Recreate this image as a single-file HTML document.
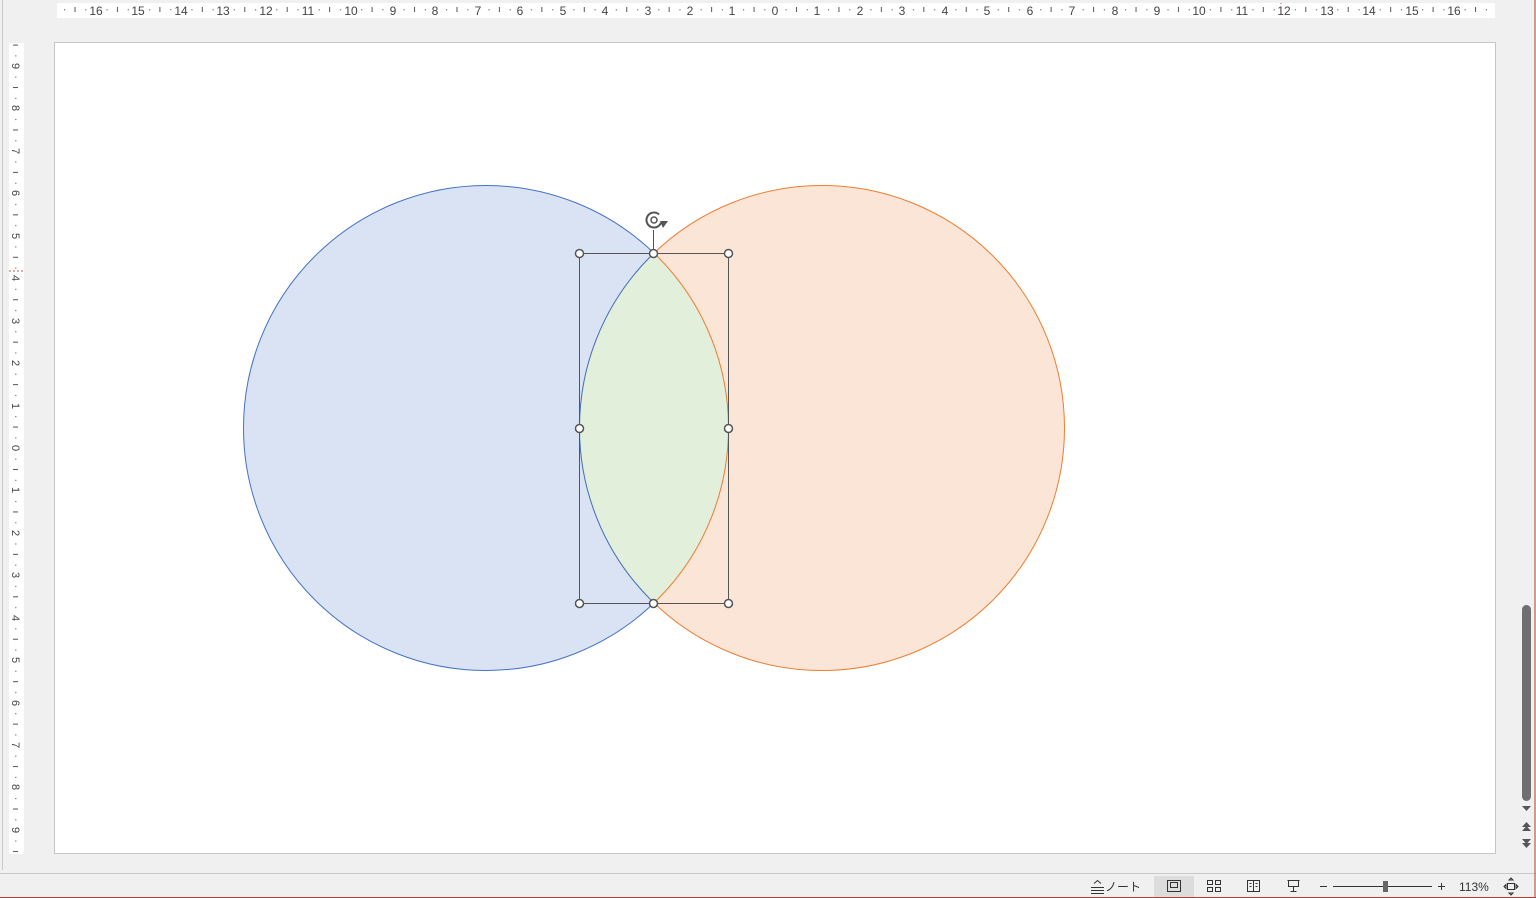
<!DOCTYPE html>
<html><head><meta charset="utf-8"><style>
html,body{margin:0;padding:0;width:1536px;height:898px;overflow:hidden;background:#f0f0f0;font-family:"Liberation Sans","Noto Sans CJK JP",sans-serif}
</style></head><body>
<svg width="1536" height="898" viewBox="0 0 1536 898" xmlns="http://www.w3.org/2000/svg" style="position:absolute;left:0;top:0">
<defs>
<pattern id="ht" x="775" y="0" width="42.44" height="20" patternUnits="userSpaceOnUse">
<rect x="10.6" y="9" width="1" height="1.5" fill="#777"/><rect x="21" y="7" width="1" height="5" fill="#555"/><rect x="31.8" y="9" width="1" height="1.5" fill="#777"/>
</pattern>
<pattern id="vt" x="0" y="448" width="20" height="42.44" patternUnits="userSpaceOnUse">
<rect x="15" y="10.6" width="1.5" height="1" fill="#777"/><rect x="13" y="21" width="5" height="1" fill="#555"/><rect x="15" y="31.8" width="1.5" height="1" fill="#777"/>
</pattern>
<clipPath id="cb"><circle cx="486" cy="428" r="242.5"/></clipPath>
<clipPath id="co"><circle cx="822" cy="428" r="242.5"/></clipPath>
</defs>
<line x1="2.5" y1="0" x2="2.5" y2="870" stroke="#c8c8c8"/>
<rect x="57" y="3" width="1438" height="15" fill="#fff"/>
<rect x="57" y="3" width="1438" height="15" fill="url(#ht)"/>
<rect x="9" y="43" width="15" height="811" fill="#fff"/>
<rect x="9" y="43" width="15" height="811" fill="url(#vt)"/>
<line x1="1281" y1="3" x2="1281" y2="18" stroke="#c0504d" stroke-dasharray="2,2"/>
<line x1="9" y1="271" x2="24" y2="271" stroke="#c0504d" stroke-dasharray="2,2"/>
<g font-size="12" fill="#444" text-anchor="middle">
<rect x="88" y="4" width="16" height="13" fill="#fff"/><text x="96" y="15">16</text>
<rect x="130" y="4" width="16" height="13" fill="#fff"/><text x="138" y="15">15</text>
<rect x="173" y="4" width="16" height="13" fill="#fff"/><text x="181" y="15">14</text>
<rect x="215" y="4" width="16" height="13" fill="#fff"/><text x="223" y="15">13</text>
<rect x="258" y="4" width="16" height="13" fill="#fff"/><text x="266" y="15">12</text>
<rect x="300" y="4" width="16" height="13" fill="#fff"/><text x="308" y="15">11</text>
<rect x="342" y="4" width="16" height="13" fill="#fff"/><text x="351" y="15">10</text>
<rect x="388" y="4" width="9" height="13" fill="#fff"/><text x="393" y="15">9</text>
<rect x="431" y="4" width="9" height="13" fill="#fff"/><text x="435" y="15">8</text>
<rect x="473" y="4" width="9" height="13" fill="#fff"/><text x="478" y="15">7</text>
<rect x="516" y="4" width="9" height="13" fill="#fff"/><text x="520" y="15">6</text>
<rect x="558" y="4" width="9" height="13" fill="#fff"/><text x="563" y="15">5</text>
<rect x="601" y="4" width="9" height="13" fill="#fff"/><text x="605" y="15">4</text>
<rect x="643" y="4" width="9" height="13" fill="#fff"/><text x="648" y="15">3</text>
<rect x="685" y="4" width="9" height="13" fill="#fff"/><text x="690" y="15">2</text>
<rect x="728" y="4" width="9" height="13" fill="#fff"/><text x="732" y="15">1</text>
<rect x="770" y="4" width="9" height="13" fill="#fff"/><text x="775" y="15">0</text>
<rect x="813" y="4" width="9" height="13" fill="#fff"/><text x="817" y="15">1</text>
<rect x="855" y="4" width="9" height="13" fill="#fff"/><text x="860" y="15">2</text>
<rect x="898" y="4" width="9" height="13" fill="#fff"/><text x="902" y="15">3</text>
<rect x="940" y="4" width="9" height="13" fill="#fff"/><text x="945" y="15">4</text>
<rect x="983" y="4" width="9" height="13" fill="#fff"/><text x="987" y="15">5</text>
<rect x="1025" y="4" width="9" height="13" fill="#fff"/><text x="1030" y="15">6</text>
<rect x="1067" y="4" width="9" height="13" fill="#fff"/><text x="1072" y="15">7</text>
<rect x="1110" y="4" width="9" height="13" fill="#fff"/><text x="1115" y="15">8</text>
<rect x="1152" y="4" width="9" height="13" fill="#fff"/><text x="1157" y="15">9</text>
<rect x="1192" y="4" width="16" height="13" fill="#fff"/><text x="1199" y="15">10</text>
<rect x="1234" y="4" width="16" height="13" fill="#fff"/><text x="1242" y="15">11</text>
<rect x="1276" y="4" width="16" height="13" fill="#fff"/><text x="1284" y="15">12</text>
<rect x="1319" y="4" width="16" height="13" fill="#fff"/><text x="1327" y="15">13</text>
<rect x="1361" y="4" width="16" height="13" fill="#fff"/><text x="1369" y="15">14</text>
<rect x="1404" y="4" width="16" height="13" fill="#fff"/><text x="1412" y="15">15</text>
<rect x="1446" y="4" width="16" height="13" fill="#fff"/><text x="1454" y="15">16</text>
</g>
<g font-size="11" fill="#444" text-anchor="middle">
<text transform="translate(12,66) rotate(90)">9</text>
<text transform="translate(12,108) rotate(90)">8</text>
<text transform="translate(12,151) rotate(90)">7</text>
<text transform="translate(12,193) rotate(90)">6</text>
<text transform="translate(12,236) rotate(90)">5</text>
<text transform="translate(12,278) rotate(90)">4</text>
<text transform="translate(12,321) rotate(90)">3</text>
<text transform="translate(12,363) rotate(90)">2</text>
<text transform="translate(12,406) rotate(90)">1</text>
<text transform="translate(12,448) rotate(90)">0</text>
<text transform="translate(12,490) rotate(90)">1</text>
<text transform="translate(12,533) rotate(90)">2</text>
<text transform="translate(12,575) rotate(90)">3</text>
<text transform="translate(12,618) rotate(90)">4</text>
<text transform="translate(12,660) rotate(90)">5</text>
<text transform="translate(12,703) rotate(90)">6</text>
<text transform="translate(12,745) rotate(90)">7</text>
<text transform="translate(12,787) rotate(90)">8</text>
<text transform="translate(12,830) rotate(90)">9</text>
</g>
<rect x="54.5" y="42.5" width="1441" height="811" fill="#fff" stroke="#c6c6c6"/>
<circle cx="486" cy="428" r="242.5" fill="#dae3f3" stroke="#4472c4"/>
<circle cx="822" cy="428" r="242.5" fill="#fbe5d6" stroke="#ed7d31"/>
<circle cx="822" cy="428" r="242.5" fill="#e2efda" clip-path="url(#cb)"/>
<circle cx="822" cy="428" r="242.5" fill="none" stroke="#4472c4" clip-path="url(#cb)"/>
<circle cx="486" cy="428" r="242.5" fill="none" stroke="#ed7d31" clip-path="url(#co)"/>
<rect x="579.5" y="253.5" width="149" height="350" fill="none" stroke="#555"/>
<line x1="653.5" y1="230" x2="653.5" y2="253" stroke="#555"/>
<circle cx="654" cy="220" r="7.5" fill="none" stroke="#555" stroke-width="2" stroke-dasharray="38 10" transform="rotate(20 654 220)"/>
<circle cx="654" cy="220" r="3" fill="none" stroke="#555" stroke-width="1.5"/>
<path d="M660 221 L668 221 L663 228 Z" fill="#555"/>
<g fill="#fff" stroke="#555" stroke-width="1.5">
<circle cx="579.5" cy="253.5" r="4"/><circle cx="653.5" cy="253.5" r="4"/><circle cx="728.5" cy="253.5" r="4"/>
<circle cx="579.5" cy="428.5" r="4"/><circle cx="728.5" cy="428.5" r="4"/>
<circle cx="579.5" cy="603.5" r="4"/><circle cx="653.5" cy="603.5" r="4"/><circle cx="728.5" cy="603.5" r="4"/>
</g>
<rect x="1522" y="605" width="9" height="196" rx="4.5" fill="#6f6f6f"/>
<path d="M1522 806 h9 l-4.5 5 z" fill="#555"/>
<path d="M1522 827 l4.5 -5 l4.5 5 z M1522 831 l4.5 -5 l4.5 5 z" fill="#555"/>
<path d="M1522 839 l4.5 5 l4.5 -5 z M1522 843 l4.5 5 l4.5 -5 z" fill="#555"/>
<line x1="0" y1="873.5" x2="1536" y2="873.5" stroke="#c8c8c8"/>
<line x1="1535" y1="0" x2="1535" y2="898" stroke="#b04030"/>
<line x1="0" y1="897.5" x2="1536" y2="897.5" stroke="#b04030"/>
<rect x="1154" y="876" width="40" height="21" fill="#dcdcdc"/>
<g stroke="#333" fill="none" stroke-width="1">
<path d="M1091 887.5 h13 M1091 890.5 h13 M1091 893.5 h13 M1094 883.5 l3.5 -3 l3.5 3"/>
<rect x="1167.5" y="880.5" width="13" height="11"/><rect x="1170.5" y="882.5" width="7" height="5"/>
<rect x="1207.5" y="880.5" width="5" height="4"/><rect x="1215.5" y="880.5" width="5" height="4"/><rect x="1207.5" y="887.5" width="5" height="4"/><rect x="1215.5" y="887.5" width="5" height="4"/>
<path d="M1247.5 880.5 h12 v11 h-12 z M1253.5 880.5 v11 M1249.5 883.5 h2 M1249.5 886.5 h2 M1255.5 883.5 h2 M1255.5 886.5 h2"/>
<path d="M1287.5 880.5 h12 M1288.5 880.5 v6 h10 v-6 M1293.5 886.5 v5 M1290.5 891.5 h6"/>
<path d="M1320 886.5 h7 M1333 886.5 h99 M1438 886.5 h7 M1441.5 883 v7"/>
</g>
<rect x="1383" y="881" width="5" height="11" fill="#666"/>
<text x="1105" y="891" font-size="12" fill="#333">ノート</text>
<text x="1459" y="891" font-size="12" fill="#333">113%</text>
<path d="M1507.5 883.5 h7 v6 h-7 z M1511 878 l-2 2 h4 z M1511 895 l-2 -2 h4 z M1504 886.5 l2 -2 v4 z M1518 886.5 l-2 -2 v4 z" fill="none" stroke="#333"/>
</svg>
</body></html>
